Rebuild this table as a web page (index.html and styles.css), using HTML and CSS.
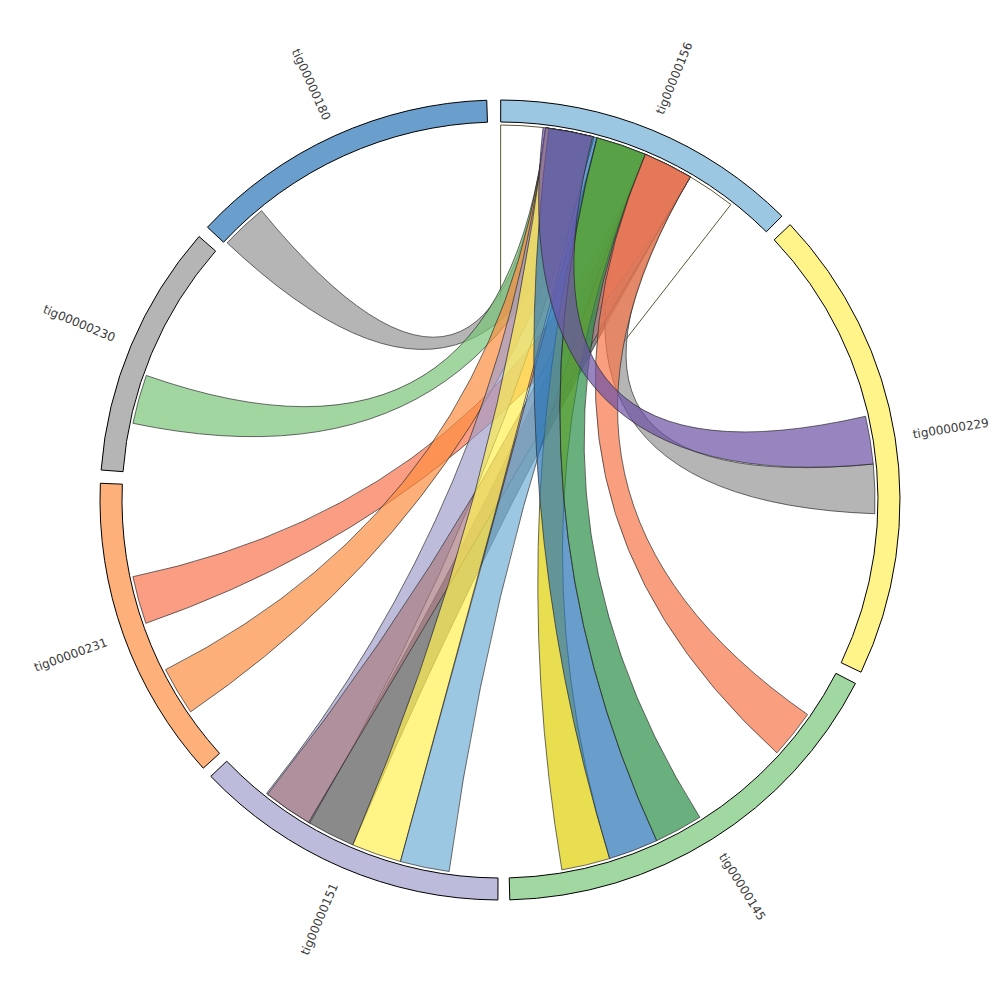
FILE: index.html
```html
<!DOCTYPE html>
<html lang="en">
<head>
<meta charset="utf-8">
<title>Chord diagram</title>
<link rel="stylesheet" href="styles.css">
</head>
<body>
<div class="chart">
  <svg id="chord" viewBox="0 0 1000 1000" xmlns="http://www.w3.org/2000/svg"></svg>
</div>
<script src="script.js"></script>
</body>
</html>
```

FILE: styles.css
```css
html, body {
  margin: 0;
  padding: 0;
  background: #ffffff;
}
.chart {
  width: 1000px;
  height: 1000px;
}
.chart svg {
  display: block;
  width: 1000px;
  height: 1000px;
}
.ring {
  stroke: #000000;
  stroke-width: 1;
}
.ribbon {
  fill-opacity: 0.7;
  stroke: #262626;
  stroke-width: 0.8;
  stroke-opacity: 0.85;
}
.selflink {
  fill: none;
  stroke: #4a4420;
  stroke-width: 0.9;
}
.label {
  font-family: "DejaVu Sans", "Liberation Sans", Arial, sans-serif;
  font-size: 12px;
  fill: #3a3a3a;
}
```

FILE: script.js
```js
(function () {
  var NS = "http://www.w3.org/2000/svg";
  var CX = 500, CY = 500, RO = 400, RI = 378, RC = 375, RL = 418;
  var svg = document.getElementById("chord");

  function pt(d, r) {
    var a = d * Math.PI / 180;
    return [CX + r * Math.sin(a), CY - r * Math.cos(a)];
  }
  function s(p) { return p[0].toFixed(2) + " " + p[1].toFixed(2); }
  function el(tag, attrs, parent) {
    var e = document.createElementNS(NS, tag);
    for (var k in attrs) e.setAttribute(k, attrs[k]);
    (parent || svg).appendChild(e);
    return e;
  }

  var segs = [
    { name: "tig00000156", a0: 0.1,   a1: 44.8,  color: "#9cc7e2" },
    { name: "tig00000229", a0: 46.5,  a1: 115.5, color: "#fff48a" },
    { name: "tig00000145", a0: 117.3, a1: 178.6, color: "#a1d7a0" },
    { name: "tig00000151", a0: 180.3, a1: 226.3, color: "#bdbbdb" },
    { name: "tig00000231", a0: 227.9, a1: 272.4, color: "#fdb07a" },
    { name: "tig00000230", a0: 274.3, a1: 311.2, color: "#b5b5b5" },
    { name: "tig00000180", a0: 313.0, a1: 358.1, color: "#6a9ecc" }
  ];

  var A = [7.0, 14.5], B = [15.0, 22.8], C = [22.8, 30.5];
  var chords = [
    { o: [313.3, 320.5], t: A, c: "#959595" },
    { o: [281.8, 289.4], t: A, c: "#79c477" },
    { o: [203.1, 210.7], t: C, c: "#585858" },
    { o: [84.5, 92.1],   t: C, c: "#959595" },
    { o: [250.8, 258.2], t: C, c: "#f8744e" },
    { o: [235.6, 243.1], t: A, c: "#fc8d40" },
    { o: [210.5, 218.5], t: A, c: "#a19fcc" },
    { o: [210.7, 218.3], t: C, c: "#ad7d85" },
    { o: [195.4, 203.1], t: A, c: "#ffef51" },
    { o: [187.8, 195.4], t: B, c: "#70afd6" },
    { o: [163.0, 170.5], t: B, c: "#ded005" },
    { o: [155.3, 163.0], t: [7.5, 15.0], c: "#2a75b6" },
    { o: [147.8, 155.3], t: B, c: "#2a8e47" },
    { o: [124.9, 132.4], t: C, c: "#f7764a" },
    { o: [77.1, 84.5],   t: [6.6, 14.3], c: "#6c51a5" }
  ];

  /* self link outline on tig00000156 */
  var gSelf = el("g", { "class": "self" });
  el("path", {
    "class": "selflink",
    d: "M500.6 300 L" + s(pt(0.1, RC)) + " A" + RC + " " + RC + " 0 0 1 " + s(pt(6.6, RC))
  }, gSelf);
  el("path", {
    "class": "selflink",
    d: "M623 343 L" + s(pt(38, RC)) + " A" + RC + " " + RC + " 0 0 0 " + s(pt(30.5, RC))
  }, gSelf);

  /* ribbons */
  var gCh = el("g", { "class": "ribbons" });
  var ctr = CX + " " + CY;
  chords.forEach(function (ch) {
    var d = "M" + s(pt(ch.o[0], RC)) +
      " A" + RC + " " + RC + " 0 0 1 " + s(pt(ch.o[1], RC)) +
      " Q" + ctr + " " + s(pt(ch.t[0], RC)) +
      " A" + RC + " " + RC + " 0 0 1 " + s(pt(ch.t[1], RC)) +
      " Q" + ctr + " " + s(pt(ch.o[0], RC)) + " Z";
    el("path", { "class": "ribbon", d: d, fill: ch.c }, gCh);
  });

  /* rings and labels */
  var gRing = el("g", { "class": "rings" });
  var gLab = el("g", { "class": "labels" });
  segs.forEach(function (g) {
    var d = "M" + s(pt(g.a0, RO)) +
      " A" + RO + " " + RO + " 0 0 1 " + s(pt(g.a1, RO)) +
      " L" + s(pt(g.a1, RI)) +
      " A" + RI + " " + RI + " 0 0 0 " + s(pt(g.a0, RI)) + " Z";
    el("path", { "class": "ring", d: d, fill: g.color }, gRing);

    var mid = (g.a0 + g.a1) / 2;
    var p = pt(mid, RL);
    var right = mid < 180;
    var rot = right ? mid - 90 : mid + 90;
    var t = el("text", {
      "class": "label",
      x: p[0].toFixed(2),
      y: p[1].toFixed(2),
      "text-anchor": right ? "start" : "end",
      "dominant-baseline": "central",
      transform: "rotate(" + rot.toFixed(2) + " " + p[0].toFixed(2) + " " + p[1].toFixed(2) + ")"
    }, gLab);
    t.textContent = g.name;
  });
})();
```
